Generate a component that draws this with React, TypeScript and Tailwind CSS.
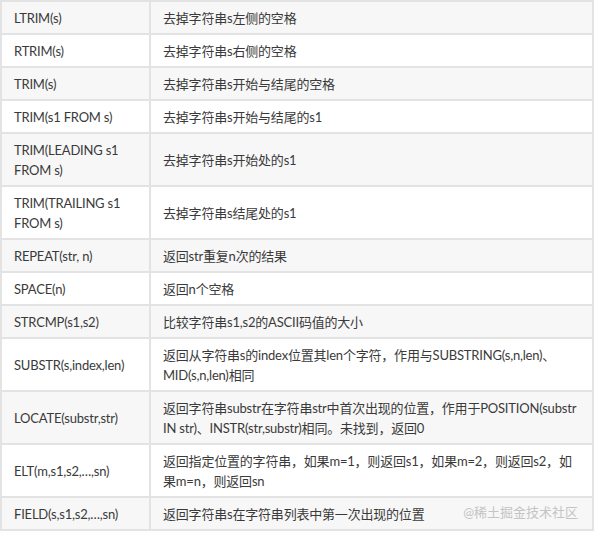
import React from 'react';

type Row = { fn: React.ReactNode; desc: React.ReactNode };

const rows: Row[] = [
  { fn: 'LTRIM(s)', desc: '去掉字符串s左侧的空格' },
  { fn: 'RTRIM(s)', desc: '去掉字符串s右侧的空格' },
  { fn: 'TRIM(s)', desc: '去掉字符串s开始与结尾的空格' },
  { fn: 'TRIM(s1 FROM s)', desc: '去掉字符串s开始与结尾的s1' },
  {
    fn: (
      <>
        TRIM(LEADING s1
        <br />
        FROM s)
      </>
    ),
    desc: '去掉字符串s开始处的s1',
  },
  {
    fn: (
      <>
        TRIM(TRAILING s1
        <br />
        FROM s)
      </>
    ),
    desc: '去掉字符串s结尾处的s1',
  },
  { fn: 'REPEAT(str, n)', desc: '返回str重复n次的结果' },
  { fn: 'SPACE(n)', desc: '返回n个空格' },
  { fn: 'STRCMP(s1,s2)', desc: '比较字符串s1,s2的ASCII码值的大小' },
  {
    fn: 'SUBSTR(s,index,len)',
    desc: (
      <>
        返回从字符串s的index位置其len个字符，作用与SUBSTRING(s,n,len)、
        <br />
        MID(s,n,len)相同
      </>
    ),
  },
  {
    fn: 'LOCATE(substr,str)',
    desc: (
      <>
        返回字符串substr在字符串str中首次出现的位置，作用于POSITION(substr
        <br />
        IN str)、INSTR(str,substr)相同。未找到，返回0
      </>
    ),
  },
  {
    fn: 'ELT(m,s1,s2,…,sn)',
    desc: (
      <>
        返回指定位置的字符串，如果m=1，则返回s1，如果m=2，则返回s2，如
        <br />
        果m=n，则返回sn
      </>
    ),
  },
  { fn: 'FIELD(s,s1,s2,…,sn)', desc: '返回字符串s在字符串列表中第一次出现的位置' },
];

export default function App() {
  return (
    <div className="w-[596px] h-[533px] bg-white" style={{ fontFamily: 'Lato, "Noto Sans CJK SC", sans-serif' }}>
      <div className="w-[594px] bg-[#e3e3e3] p-[2px] flex flex-col gap-[2px] text-[13px] leading-[20px] tracking-[-0.2px] text-[#3a3a3a]">
        {rows.map((r, i) => (
          <div key={i} className="grid grid-cols-[147px_1fr] gap-[2px]">
            <div className={`${i % 2 === 0 ? 'bg-[#f7f7f7]' : 'bg-white'} px-3 py-[5.5px] flex items-center`}>
              <div>{r.fn}</div>
            </div>
            <div className={`${i % 2 === 0 ? 'bg-[#f7f7f7]' : 'bg-white'} px-3 py-[5.5px] flex items-center relative whitespace-nowrap`}>
              <div>{r.desc}</div>
              {i === rows.length - 1 && (
                <span className="absolute right-[14px] top-[4px] text-[13px] tracking-normal text-[#c4c4c4]">@稀土掘金技术社区</span>
              )}
            </div>
          </div>
        ))}
      </div>
    </div>
  );
}
